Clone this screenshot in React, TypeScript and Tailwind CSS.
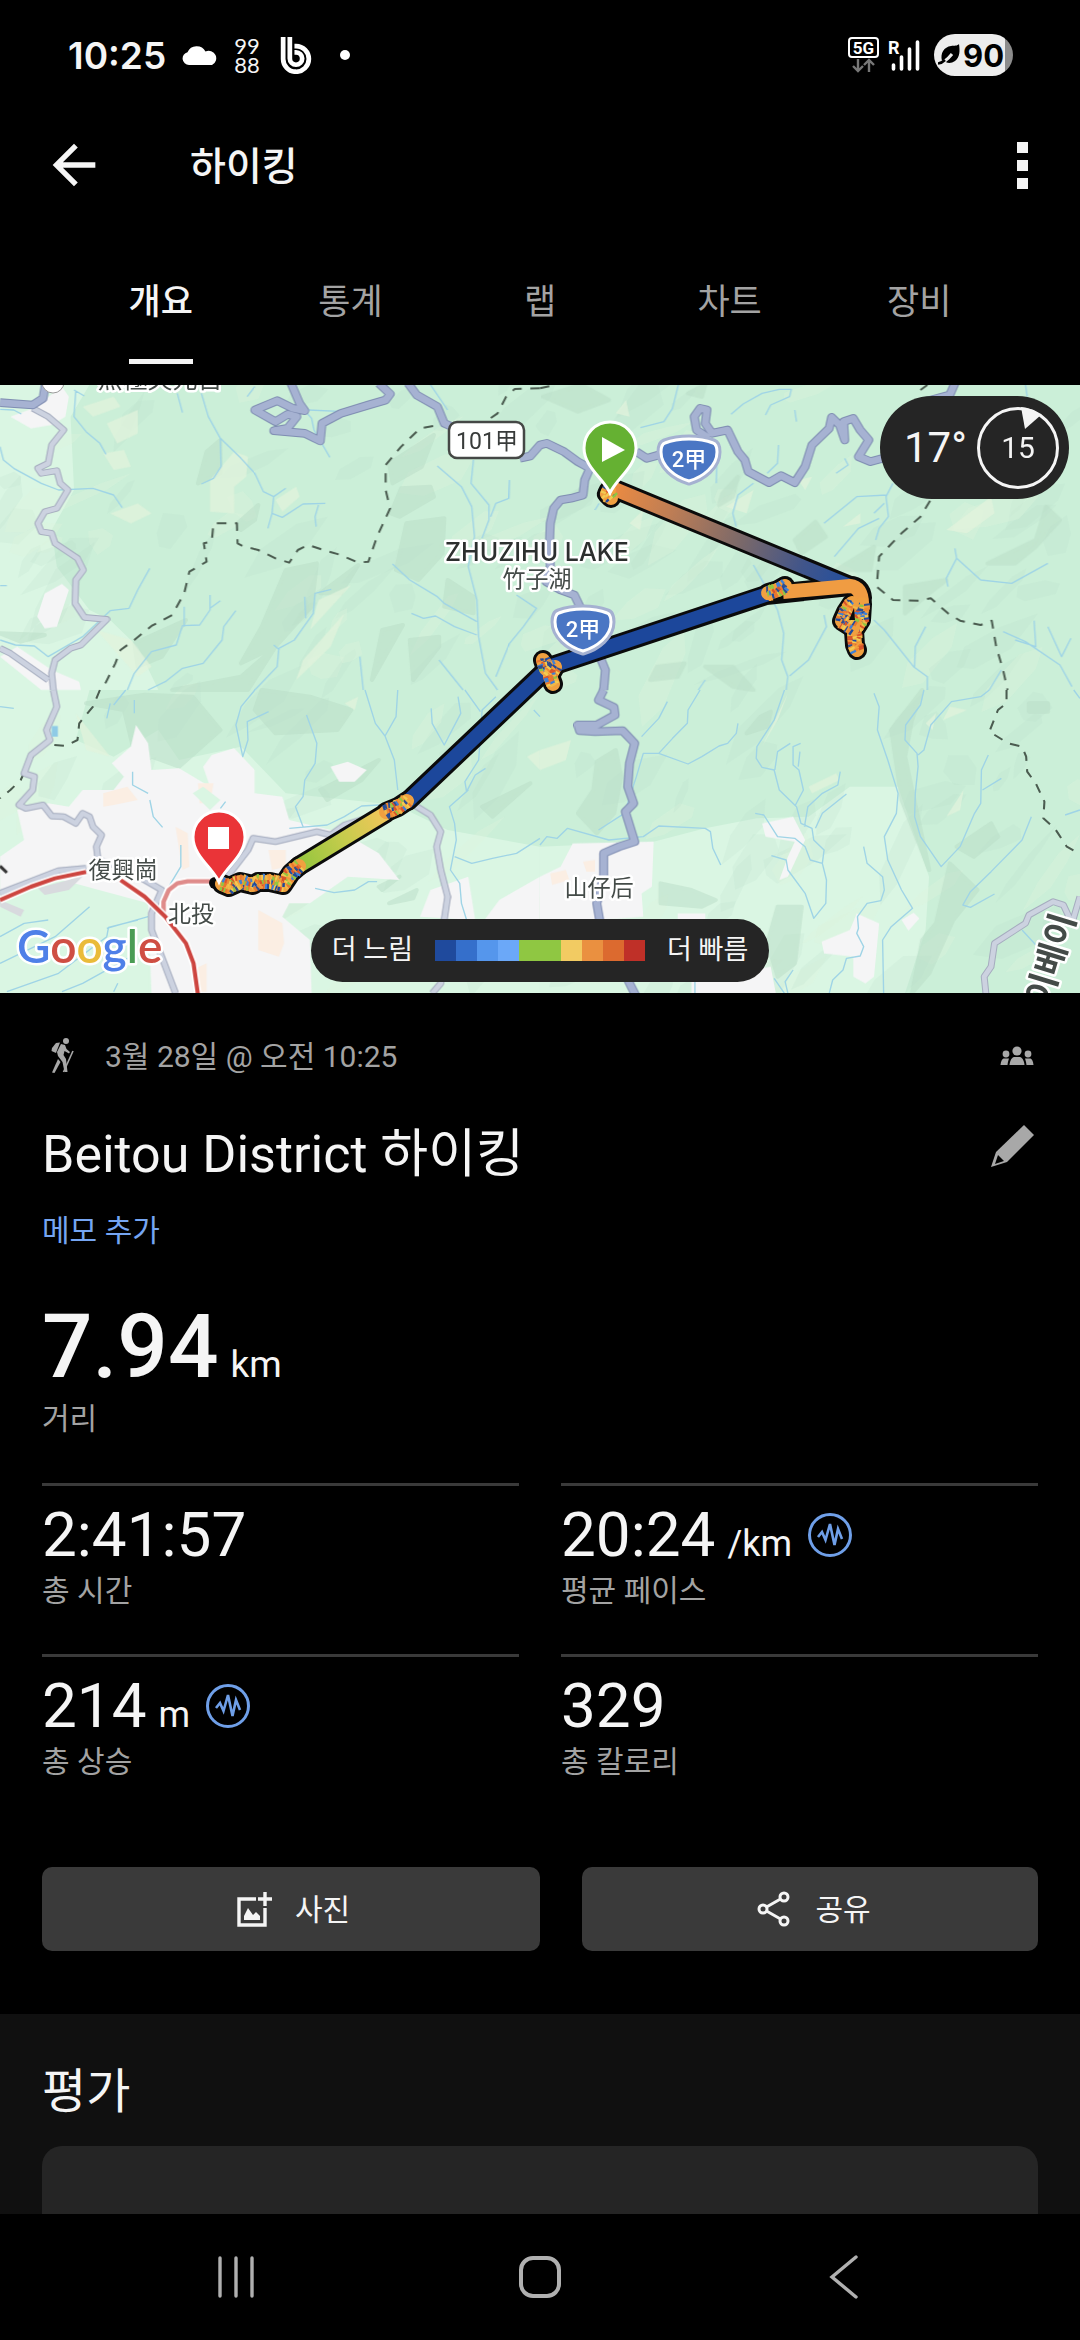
import { ReactNode } from "react";
import { MdArrowBack } from "react-icons/md";

type Point = [number, number];

const TABS = ["개요", "통계", "랩", "차트", "장비"];

const LEGEND_COLORS = [
  "bg-[#1f4a9d]",
  "bg-[#356fcb]",
  "bg-[#5596ec]",
  "bg-[#6ba8f8]",
  "bg-[#8fc742]",
  "bg-[#8fc742]",
  "bg-[#f2cb62]",
  "bg-[#ea9040]",
  "bg-[#dc6a2f]",
  "bg-[#bf3028]",
];

const SPEED_COLORS = [
  "#f2a03d",
  "#1f4a9d",
  "#e9772f",
  "#f2cb52",
  "#8fc742",
  "#ee8a35",
  "#3f7fd6",
  "#f0b848",
  "#d9542b",
  "#f39a3c",
  "#2f4f8f",
];

// Map geometry, drawn on a grid of four tiles of 1568x930 units.
const TILES: Record<string, string> = {
  a: "translate(0 0)",
  b: "translate(1568 0)",
  c: "translate(0 930)",
  d: "translate(1568 930)",
};

const HIGHWAYS = {
  a: "M0 68L95 75L125 55L132 10M845 10L870 70L885 92L850 85L805 62L740 90L800 125L835 103L862 110L835 145L795 152L885 160L930 183L935 130L990 100L1070 75L1120 60L1133 42L1100 10M1185 10L1210 45L1270 80L1290 130L1312 140",
  b: "M-58 235L-28 228L0 195L20 190L70 215L110 245L145 265L130 300L125 345L90 355L60 360L40 385L30 430L28 480L30 560L18 605L60 630L100 645L130 710L150 760L170 820L190 870L185 930M280 215L310 235L345 225L400 200L450 300M490 175L455 150L448 110L465 85L485 90L480 130L500 160L545 150L575 215L595 240L605 275L665 308L700 287L740 308L770 260L790 195L840 145L847 112L870 135L885 180L882 125L910 115L930 150L955 180L925 230L960 245L995 235M1205 10L1190 45L1100 70",
  c: "",
  d: "M185 0L170 30L215 52L218 75L165 105L110 105L115 122L160 125L240 122L275 160L260 220L255 290L272 340L248 365L275 455L230 470L185 490L185 560L165 640L175 700L265 890L285 930",
};

const STREETS = {
  a: "M95 85L140 110L185 150L150 195L140 250L110 265L120 280L165 272L175 310L197 330L165 385L130 395L110 430L120 455L150 460L160 490L225 535L242 570L220 600L218 670L245 712L310 718L235 795L205 805L160 840L150 880L155 930M0 805L30 820L140 900",
  b: "",
  c: "M155 0L165 50L135 120L145 150L90 195L70 250L100 260L95 300L55 345L75 355L125 345L150 378L185 380L220 400L240 370L260 380L270 410L295 435L280 470L285 510L350 530L420 570L470 600L440 670L440 720L510 910M660 560L720 480L735 445L800 455L920 425L960 435L1000 405L1080 380M1195 340L1250 375L1280 425L1268 470L1280 540L1300 620L1290 690L1280 880L1255 910M0 610L170 542L250 535",
  d: "M1295 910L1290 860L1310 830L1320 760L1410 700L1420 675L1490 635L1520 645L1545 700L1568 620",
};

const STREAMS = {
  a: "M215 30L245 48M220 35L215 110L250 155L290 190L308 223M0 200L10 240L40 265L120 310L170 330L270 325L330 345L355 383M0 88L40 90L62 102M0 617L20 617M585 40L605 110L640 175L700 235L740 280L765 335L795 350L830 325M795 350L790 400L820 412L880 372L945 370M925 375L915 410L918 440M790 400L778 445M640 175L642 260L620 295L585 312M515 40L530 98M740 20L718 50M885 92L905 115L912 150L958 232M895 90L1000 95M1250 14L1300 90M1270 258L1340 320L1370 380L1378 470L1360 560L1385 660L1390 770L1410 880L1445 930M1375 240L1368 310L1420 375L1420 420L1400 475M1480 300L1478 355L1440 370L1425 410M1140 552L1190 600L1270 650L1290 670L1385 725M1195 700L1230 715L1265 708L1320 740L1385 765M1500 645L1558 685L1520 740L1480 790L1440 890M1045 830L1055 930M1275 840L1345 930M435 565L400 630L375 685L320 692L240 770L140 830L100 798L45 795L0 780M610 645L610 690L580 735L530 737L512 795L440 815L390 880L370 930M535 680L535 740M640 662L610 685M685 692L650 740L645 780L590 850L530 865L480 905L430 930M962 628L915 640L910 700L855 780L810 805L805 860L740 930M885 650L888 715M795 795L812 810",
  b: "M402 14L385 85L360 125L292 143M555 103L590 72L645 40L695 28L730 28L725 50L670 75L655 105M740 90L745 125M693 195L690 250L660 280M620 310L575 345L560 400L570 440M1008 345L920 350L825 430M1025 310L1005 350L1012 410L985 445L975 480M985 415L925 445L855 530M1000 370L970 400M620 555L650 610L690 690L708 760L702 840L720 890L715 930M825 705L832 740L780 840L725 888M480 900L460 930M970 720L1000 750L1085 860L1125 890L1125 930M1120 740L1090 800L1088 860M1205 505L1210 535L1180 595L1185 620M1210 535L1280 600L1370 610L1475 550M1345 755L1410 785L1510 855L1545 920M1435 722L1440 800L1380 780M1475 740L1515 830L1542 775M1340 870L1305 930M860 280L895 255L885 235M515 220L512 310M1410 14L1415 50M160 390L172 370",
  c: "M320 40L310 85M365 0L330 45M390 30L390 70M740 0L700 50L685 105L705 200L720 150L718 95L780 65M890 75L920 160L915 220L885 270L880 320L858 350L880 410M1060 0L1090 100L1118 138L1150 80L1155 0M1118 138L1145 210L1155 300M1100 345L1050 348L1000 380L950 405L840 415M1330 20L1338 70L1290 165L1255 100L1252 55M1395 65L1350 0M1568 80L1550 60M1410 235L1380 255L1355 305L1350 275L1390 210L1400 60L1440 20M1360 300L1305 350L1320 400L1325 450L1308 540L1335 580L1340 640L1355 690M1568 445L1500 490L1430 505L1370 520L1320 500M385 245L385 285L430 310M435 330L445 380L472 412M525 465L525 530L490 590M915 595L970 608L1030 600L1070 575L1095 575M0 50L40 55M655 335L640 355M0 820L60 790L160 740L260 650M310 740L315 712L400 690M430 680L310 715M310 740L170 850L20 905M380 800L240 880L180 905M0 740L70 700L140 690M330 905L342 880",
  d: "M370 35L345 85L295 140M465 0L430 60L428 100L385 145L345 190L300 190L280 260L245 370L170 420M345 190L430 222L470 200L520 168L545 160L570 130L575 100M710 0L680 90L630 170L628 205L645 232L680 240L695 300L745 350L758 400L790 415L795 450L825 480L820 520L832 570L830 640L795 685L770 610L720 540L715 510L672 497M727 160L690 185L682 240M757 160L735 170L735 225L752 240L765 300L742 345M755 185L750 230M872 245L865 285L820 310L778 350L768 410M890 312L820 370L800 415M625 370L650 375L690 440L740 445L770 470L785 510L820 520M0 465L20 440L50 445L80 415L200 450L300 440L345 408L480 415L495 425L502 475L525 525M970 10L985 50L980 120L1010 210L1040 310L1035 370L1000 440L1010 510L1050 600L1082 655L1020 710L995 750L998 910M1115 0L1105 45L1062 105L1060 150L1095 190L1098 230L1090 310L1088 380L1105 440L1165 530L1220 470L1262 370L1280 340L1282 240L1302 195M1305 0L1280 20L1195 35L1135 105L1115 180L1098 195M1340 265L1285 300M1427 380L1400 450L1310 545L1250 605L1228 645L1250 652L1320 612M940 470L950 520L995 560L1000 600L990 632L950 640L922 680L925 715L920 730L940 770L930 798L890 805L880 840L850 870L840 910M735 840L712 875L720 910M680 865L710 910M450 870L450 910M1550 0L1568 25M1568 360L1525 375M1400 720L1440 765",
};

const BORDERS = {
  a: "M1568 25L1495 27L1470 50L1445 100L1420 118M1258 138L1220 145L1165 200L1120 255L1120 330L1133 385L1095 470L1070 545L1040 548L990 525L940 510L895 495L865 510L840 548L800 535L750 510L705 498L690 490L688 430L620 430L615 485L592 490L600 545L550 575L535 640L500 705L440 738L390 780L350 810L335 850L305 912",
  b: "M0 25L45 15M1105 30L1125 15M1133 362L1105 410L1050 460L985 530L978 620L1025 660L1100 662L1135 655L1185 700L1220 722L1280 735L1312 722L1325 800L1345 870L1358 930",
  c: "M290 0L270 50L230 100L225 150L190 168L130 162L90 205L60 270L30 300L0 325",
  d: "M1355 0L1355 40L1330 60L1305 125L1360 160L1400 170L1412 200L1415 245L1440 280L1465 335L1462 385L1495 415L1530 470L1568 492",
};

const URBAN = {
  a: "M30 110L95 85L180 20L200 50L190 110L150 135L90 145ZM130 640L180 612L200 630L165 740L130 745L108 710ZM0 830L50 800L150 870L230 905L235 930L120 930Z",
  b: "",
  c: "M70 450L50 360L140 340L200 350L240 300L330 300L360 260L325 220L380 170L395 105L430 160L440 240L520 235L610 290L590 230L615 195L680 175L740 240L740 310L820 320L840 390L1000 430L1100 490L1160 570L1010 560L900 640L840 640L820 680L900 750L905 910L440 910L430 640L300 690L240 600L0 660L0 500ZM960 230L1010 215L1065 240L1030 275L985 275ZM1220 680L1250 600L1360 560L1380 690ZM1450 630L1568 560L1568 700L1400 700Z",
  d: "M0 560L60 530L95 460L330 455L325 590L295 610L300 680L180 690L0 690ZM645 400L735 380L770 450L720 560L695 570L720 500L740 455L655 440ZM818 755L900 720L920 670L985 700L970 860L945 880L910 860L910 800L825 790ZM1050 690L1085 668L1102 685L1070 722ZM400 670L480 670L480 690L400 700ZM440 870L670 830L685 910L440 910Z",
};

const LOWLAND = {
  a: "M0 14L260 14L205 110L215 330L150 450L165 560L260 690L320 720L400 800L460 930L0 930Z",
  b: "",
  c: "M0 0L260 0L220 150L330 200L460 120L520 210L700 170L830 310L1150 345L1300 420L1568 470L1568 910L0 910Z",
  d: "M0 470L330 455L480 415L630 385L780 380L900 290L1040 290L1130 560L1120 720L1060 910L0 910Z",
};

const SHADE = {
  a: "M1165 325L1250 320L1260 350L1160 410L1135 400ZM1180 430L1290 415L1285 520L1215 600L1150 570ZM830 570L920 550L905 680L800 800L700 850L760 740ZM600 215L640 180L640 280L575 310ZM1130 250L1260 165L1225 260L1140 310ZM0 760L130 765L60 785ZM390 790L540 720L470 830L400 860ZM930 640L1040 555L990 640ZM690 430L750 375L740 420L700 450ZM1300 600L1375 650L1375 700L1290 680ZM1190 780L1275 770L1275 800L1200 900ZM1080 900L1110 750L1170 735ZM500 930L700 890L800 800L720 930Z",
  b: "M10 50L120 14L200 60L110 95ZM740 480L800 425L830 470L760 520ZM1210 180L1300 210L1290 240L1200 215ZM1470 380L1510 420L1440 500L1380 550L1300 550L1440 480ZM530 340L575 290L560 350L520 375ZM1060 620L1180 600L1130 640L1060 700ZM480 860L560 860L620 930L560 920ZM340 860L420 850L400 890L320 900ZM430 40L480 14L470 50ZM960 570L860 570L970 500Z",
  c: "M400 230L360 60L250 40L420 14L560 20L640 120L520 230L440 200ZM760 0L900 20L1020 60L980 120L800 130L740 60ZM930 300L1100 210L1050 270L950 330ZM1400 350L1540 280L1430 380ZM1100 590L1160 560L1110 600ZM1130 640L1210 600L1200 625Z",
  d: "M165 215L220 180L235 260L215 370L165 430L110 370L155 300ZM1020 120L1110 0L1080 90L1060 200L1130 540L1050 330ZM1110 750L1150 700L1190 520L1270 600L1200 690L1130 850L1080 910ZM1210 470L1310 400L1330 440L1260 500ZM1420 40L1475 40L1475 65L1420 65ZM660 760L690 650L760 650L740 820L690 860ZM350 580L440 600L510 630L470 650L350 640ZM640 80L670 65L660 110L600 130Z",
};

const MEADOW = {
  a: "M610 300L680 215L720 230L715 290L680 320L680 400L610 395ZM310 130L400 90L400 160L340 190ZM800 360L860 320L870 350L820 395ZM300 220L360 210L380 260L330 270ZM320 400L400 370L440 400L380 430ZM240 80L330 50L350 80L270 110ZM925 660L1020 615L900 750ZM880 840L1000 700L960 800L860 900ZM280 750L380 780L440 860L400 890Z",
  b: "M1180 450L1310 350L1320 400L1240 460ZM540 380L620 330L600 400ZM220 100L250 60L260 110ZM880 440L930 400L930 430ZM260 430L300 390L290 450ZM750 300L790 290L770 330Z",
  c: "M220 70L320 200L250 180ZM1530 200L1568 180L1568 240ZM1000 40L1040 20L1030 60Z",
  d: "M0 180L90 150L75 210L0 240ZM645 170L720 10L690 90ZM1190 50L1240 60L1170 90ZM1120 100L1150 70L1140 120ZM780 290L860 250L870 270L790 310ZM1180 380L1230 300L1220 360Z",
};

const PEACH = {
  a: "",
  b: "",
  c: "M300 310L370 290L400 330L330 345L300 350ZM510 410L545 430L550 530L530 540ZM780 480L830 480L830 530L790 540ZM750 660L820 700L825 760L810 800L750 780ZM575 280L620 280L610 340L580 340ZM560 840L600 820L600 905L570 905Z",
  d: "M30 550L75 540L85 570L35 585ZM125 515L160 510L160 545L135 545Z",
};

// Small seeded generator, so the hillshade is the same on every render.
const makeRandom = (seed: number) => {
  let s = seed;
  return () => {
    s = (s * 16807) % 2147483647;
    return s / 2147483647;
  };
};

const hillshade = (() => {
  const rand = makeRandom(4711);
  return Array.from({ length: 230 }, (_, i) => {
    const cx = rand() * 3136;
    const cy = rand() * 1840;
    const len = 40 + rand() * 120;
    const wid = 14 + rand() * 40;
    const tilt = -0.3 - rand() * 0.9;
    const pts = Array.from({ length: 6 }, (_, k) => {
      const a = (k / 6) * Math.PI * 2;
      const x = Math.cos(a) * len * (0.6 + rand() * 0.6);
      const y = Math.sin(a) * wid * (0.6 + rand() * 0.6);
      return [
        Math.round(cx + x * Math.cos(tilt) - y * Math.sin(tilt)),
        Math.round(cy + x * Math.sin(tilt) + y * Math.cos(tilt)),
      ].join(",");
    });
    return { points: pts.join(" "), light: i % 3 === 0 };
  });
})();

const Layer = ({
  paths,
  ...rest
}: {
  paths: Record<string, string>;
  fill?: string;
  stroke?: string;
  strokeWidth?: number;
  strokeDasharray?: string;
  opacity?: number;
}) => (
  <g fill="none" strokeLinejoin="round" {...rest}>
    {Object.entries(paths).map(([tile, d]) =>
      d ? <path key={tile} d={d} transform={TILES[tile]} /> : null,
    )}
  </g>
);

const toPoints = (points: Point[]) => points.map((p) => p.join(",")).join(" ");

// Part of the track where the pace changes at nearly every sample.
const MixedTrack = ({ points, seed }: { points: Point[]; seed: number }) => {
  const rand = makeRandom(seed * 7919);
  const marks: ReactNode[] = [];
  points.slice(1).forEach(([x2, y2], i) => {
    const [x1, y1] = points[i];
    const len = Math.hypot(x2 - x1, y2 - y1);
    const steps = Math.max(1, Math.round(len / 2));
    const nx = -(y2 - y1) / len;
    const ny = (x2 - x1) / len;
    for (let s = 0; s <= steps; s++) {
      const x = x1 + ((x2 - x1) * s) / steps;
      const y = y1 + ((y2 - y1) * s) / steps;
      [-7, -2, 2].forEach((a, k) => {
        const b = a + 5;
        const skew = (rand() - 0.5) * 3;
        marks.push(
          <line
            key={`${i}-${s}-${k}`}
            x1={x + nx * a + skew}
            y1={y + ny * a}
            x2={x + nx * b}
            y2={y + ny * b + skew}
            stroke={SPEED_COLORS[Math.floor(rand() * SPEED_COLORS.length)]}
            strokeWidth={2.4}
          />,
        );
      });
    }
  });
  return (
    <g>
      <polyline
        points={toPoints(points)}
        fill="none"
        stroke="#f0a040"
        strokeWidth={14}
        strokeLinejoin="round"
        strokeLinecap="round"
      />
      {marks}
    </g>
  );
};

const MIXED: Point[][] = [
  [
    [609, 490],
    [607, 494],
    [611, 498],
  ],
  [
    [768, 593],
    [778, 590],
    [785, 586],
  ],
  [
    [862, 604],
    [861, 620],
    [854, 631],
    [855, 645],
    [857, 650],
  ],
  [
    [852, 603],
    [846, 612],
    [842, 621],
    [853, 628],
  ],
  [
    [543, 660],
    [546, 669],
    [555, 667],
    [550, 676],
    [553, 684],
  ],
  [
    [407, 801],
    [398, 807],
    [386, 812],
  ],
  [
    [299, 866],
    [291, 873],
    [283, 885],
    [270, 882],
    [258, 882],
    [253, 885],
    [240, 882],
    [229, 887],
    [222, 884],
  ],
];

const RoadShield = ({ x, y }: { x: number; y: number }) => (
  <g transform={`translate(${x} ${y})`}>
    <path
      d="M0-22C10-22 19-20 25-18C28-17 29-14 29-8C29 6 15 18 0 22C-15 18-29 6-29-8C-29-14-28-17-25-18C-19-20-10-22 0-22Z"
      fill="#4a76c4"
      stroke="#a5b1d1"
      strokeWidth="7"
    />
    <path
      d="M0-21C10-21 19-19 24-17C27-16 28-13 28-8C28 6 14 17 0 21C-14 17-28 6-28-8C-28-13-27-16-24-17C-19-19-10-21 0-21Z"
      fill="#4a76c4"
      stroke="#fff"
      strokeWidth="3"
    />
    <text
      y="7"
      textAnchor="middle"
      className="fill-white text-[22px] font-medium"
    >
      2甲
    </text>
  </g>
);

const MapPin = ({
  x,
  y,
  color,
  children,
}: {
  x: number;
  y: number;
  color: string;
  children: ReactNode;
}) => (
  <g transform={`translate(${x} ${y})`}>
    <path
      d="M0 44C-6 30-26 18-26-1A26 26 0 1 1 26-1C26 18 6 30 0 44Z"
      fill={color}
      stroke="#fff"
      strokeWidth="3"
    />
    {children}
  </g>
);

const RouteMap = () => (
  <svg
    viewBox="0 385 1080 608"
    className="block w-full"
    role="img"
    aria-label="하이킹 경로 지도"
  >
    <defs>
      <linearGradient
        id="descent"
        gradientUnits="userSpaceOnUse"
        x1="612"
        y1="488"
        x2="850"
        y2="585"
      >
        <stop offset="0" stopColor="#ec8b41" />
        <stop offset="0.25" stopColor="#bd7d55" />
        <stop offset="0.55" stopColor="#79686a" />
        <stop offset="0.8" stopColor="#41558a" />
        <stop offset="1" stopColor="#224f9f" />
      </linearGradient>
      <linearGradient
        id="climb"
        gradientUnits="userSpaceOnUse"
        x1="303"
        y1="864"
        x2="384"
        y2="815"
      >
        <stop offset="0" stopColor="#97c63f" />
        <stop offset="0.5" stopColor="#c5cc4c" />
        <stop offset="1" stopColor="#f0c65a" />
      </linearGradient>
    </defs>

    <rect y="385" width="1080" height="608" fill="#cbefd8" />
    <g transform="translate(0 380) scale(0.34435 0.33333)">
      <Layer paths={LOWLAND} fill="#daf6e3" />
      {hillshade.map(({ points, light }) => (
        <polygon
          key={points}
          points={points}
          fill={light ? "#def3dc" : "#b6dcc4"}
          opacity={light ? 0.35 : 0.16}
        />
      ))}
      <Layer
        paths={SHADE}
        fill="#b9dcc6"
        stroke="#b9dcc6"
        strokeWidth={12}
        opacity={0.5}
      />
      <Layer paths={MEADOW} fill="#e2f3dc" opacity={0.75} />
      <Layer paths={URBAN} fill="#f5f5f6" />
      <Layer paths={PEACH} fill="#fbeee3" />
      <path
        d="M0 1530L180 1500L430 1570L430 1840L0 1840ZM560 1240L590 1220L640 1260L610 1290Z"
        fill="#daf6e3"
      />
      <path
        d="M110 1525L200 1500L250 1480L200 1530L130 1545ZM0 1560L70 1590L60 1610L0 1580Z"
        fill="#d8dade"
      />
      <Layer paths={STREAMS} stroke="#9fd4e6" strokeWidth={4} />
      <Layer
        paths={BORDERS}
        stroke="#4b5c50"
        strokeWidth={6}
        strokeDasharray="28 25"
      />
      <Layer paths={STREETS} stroke="#a6adbf" strokeWidth={20} />
      <Layer paths={STREETS} stroke="#ccd2e0" strokeWidth={14} />
      <Layer paths={HIGHWAYS} stroke="#7f8db2" strokeWidth={26} />
      <Layer paths={HIGHWAYS} stroke="#a6b2d2" strokeWidth={20} />
      <g transform={TILES.c} fill="none" strokeLinejoin="round">
        <path
          d="M475 675L475 635L490 600L515 580L545 574L630 574"
          stroke="#fff"
          strokeWidth="24"
        />
        <path
          d="M475 675L475 635L490 600L515 580L545 574L630 574"
          stroke="#df8b8a"
          strokeWidth="13"
        />
        <path
          d="M0 630L90 590L160 565L250 546M350 570L420 620L480 680L540 760L562 820L575 915"
          stroke="#fff"
          strokeWidth="22"
        />
        <path
          d="M0 630L90 590L160 565L250 546M350 570L420 620L480 680L540 760L562 820L575 915"
          stroke="#cd4540"
          strokeWidth="12"
        />
        <path d="M0 528L20 548" stroke="#333" strokeWidth="9" />
        <path d="M150 108h18v32h-18z" fill="#8fcbe6" />
      </g>
    </g>

    <circle cx="53" cy="382" r="11" fill="#fff" stroke="#999" />

    <g
      className="fill-[#444b48] text-[23px]"
      stroke="#fff"
      strokeWidth="5"
      strokeLinejoin="round"
      paintOrder="stroke"
      textAnchor="middle"
    >
      <text x="160" y="388" className="text-[25px]">
        無極天元宮
      </text>
      <text
        x="537"
        y="561"
        className="fill-[#2c2f2e] font-['Inter'] text-[25px] font-medium"
      >
        ZHUZIHU LAKE
      </text>
      <text x="537" y="587">
        竹子湖
      </text>
      <text x="599" y="896">
        山仔后
      </text>
      <text x="123" y="878">
        復興崗
      </text>
      <text x="191" y="922">
        北投
      </text>
      <text
        transform="translate(1076 918) rotate(-73)"
        textAnchor="end"
        className="text-[34px] font-bold"
      >
        타이베이
      </text>
    </g>

    <rect
      x="449"
      y="422"
      width="75"
      height="36"
      rx="8"
      fill="#fff"
      stroke="#454846"
      strokeWidth="2.5"
    />
    <text
      x="487"
      y="449"
      textAnchor="middle"
      className="fill-[#383b3a] text-[23px]"
    >
      101甲
    </text>

    <g
      fill="none"
      stroke="#0b0b0b"
      strokeWidth="20"
      strokeLinejoin="round"
      strokeLinecap="round"
    >
      <path d="M612 488L850 586" />
      <path d="M549 667L766 595L850 586Q861 586 862 598" />
      <path d="M545 671L408 801M386 813L299 866" />
      {MIXED.map((points) => (
        <polyline key={points[0].join()} points={toPoints(points)} />
      ))}
    </g>
    <circle cx="215" cy="883" r="6" fill="#0b0b0b" />
    <g fill="none" strokeWidth="14" strokeLinejoin="round">
      <path d="M612 488L852 587" stroke="url(#descent)" />
      <path d="M552 666L768 594M545 671L406 803" stroke="#1c479b" />
      <path d="M783 592L850 586Q862 587 862 604" stroke="#f09c42" />
      <path d="M386 813L299 866" stroke="url(#climb)" />
    </g>
    {MIXED.map((points, i) => (
      <MixedTrack key={i} points={points} seed={97 + i * 31} />
    ))}
    <path d="M854 608l-5 12h6z" fill="#0b0b0b" />

    <RoadShield x={689} y={460} />
    <RoadShield x={583} y={630} />

    <MapPin x={610} y={449} color="#65b132">
      <path d="M-8-12L15 1L-8 13Z" fill="#fff" />
    </MapPin>
    <MapPin x={219} y={838} color="#ea3438">
      <path d="M-11-11H10V11H-11Z" fill="#fff" />
    </MapPin>

    <text
      x="17"
      y="963"
      className="font-['Lato'] text-[46px] font-semibold"
      stroke="#fff"
      strokeWidth="5"
      strokeLinejoin="round"
      paintOrder="stroke"
    >
      <tspan fill="#4f80e8">G</tspan>
      <tspan fill="#cf4e43">o</tspan>
      <tspan fill="#eabb3a">o</tspan>
      <tspan fill="#4f80e8">g</tspan>
      <tspan fill="#4a9c54">l</tspan>
      <tspan fill="#cf4e43">e</tspan>
    </text>
  </svg>
);

const StatusBar = () => (
  <div className="flex h-[110px] items-center justify-between pr-[67px] pl-[68px]">
    <div className="flex items-center">
      <span className="mr-4 font-['Inter'] text-[37px] leading-none font-semibold">
        10:25
      </span>
      <svg width="36" height="20" viewBox="0 0 36 20" className="mr-4">
        <path
          d="M7 20A6.500 6.500 0 0 1 5.500 7.200A10 10 0 0 1 23.500 6.500A7 7 0 0 1 30 20Z"
          fill="#fff"
        />
      </svg>
      <span className="mr-5 flex flex-col font-['Lato'] text-[22px] leading-[19px]">
        <span>99</span>
        <span>88</span>
      </span>
      <svg width="32" height="37" viewBox="0 0 30 36" className="mr-7">
        <g fill="none" stroke="#fff" strokeWidth="4.600">
          <path d="M2.500 0V21A12.500 12.500 0 1 0 15 8.800H13.500" />
          <path d="M9 0V21A6 6 0 1 0 15 15H13.500" />
        </g>
      </svg>
      <span className="size-[10px] rounded-full bg-white" />
    </div>
    <div className="flex items-center">
      <svg width="32" height="38" viewBox="0 0 32 38" className="mr-2">
        <rect
          x="1"
          y="2"
          width="29"
          height="19"
          rx="3"
          fill="none"
          stroke="#fff"
          strokeWidth="2"
        />
        <text
          x="15.500"
          y="17.500"
          textAnchor="middle"
          className="fill-white text-[17px] font-bold"
        >
          5G
        </text>
        <path
          d="M10 23V35M5 30L10 35L15 30M21 36V24M16 29L21 24L26 29"
          fill="none"
          stroke="#777"
          strokeWidth="2.400"
        />
      </svg>
      <svg width="32" height="34" viewBox="0 0 32 34" className="mr-[14px]">
        <text x="0" y="16" className="fill-white text-[18px] font-bold">
          R
        </text>
        <path
          d="M5.500 27V31M13.500 19V31M21.500 11V31M29.500 4V31"
          stroke="#fff"
          strokeWidth="3.600"
          strokeLinecap="round"
        />
      </svg>
      <div className="flex h-[42px] w-[79px] items-center gap-[2px] overflow-hidden rounded-full bg-linear-to-r from-[#ededed] from-90% to-[#8c8c8c] to-90% pl-1">
        <svg width="23" height="22" viewBox="0 0 23 22">
          <path
            d="M4 17C2 9 6 3 13 2C17 1.500 19 2 21 0C22 7 22 13 17 17C13 20 8 19 6 17Z"
            fill="#000"
          />
          <path
            d="M0 20C6 19 10 15 14 10"
            fill="none"
            stroke="#ededed"
            strokeWidth="3"
          />
          <path
            d="M0 19.500C3 19 5 18 7 16"
            fill="none"
            stroke="#000"
            strokeWidth="2.500"
          />
        </svg>
        <span className="font-['Inter'] text-[31px] leading-none font-bold text-black">
          90
        </span>
      </div>
    </div>
  </div>
);

const WaveIcon = () => (
  <svg width="44" height="44" viewBox="0 0 44 44" fill="none" stroke="#6f9fe8">
    <circle cx="22" cy="22" r="20.500" strokeWidth="3" />
    <path
      d="M10 24L14 19L17.500 27L22 11L26.500 32L30 16L34 26"
      strokeWidth="2.600"
    />
  </svg>
);

const Stat = ({
  value,
  unit,
  label,
  estimated,
}: {
  value: string;
  unit?: string;
  label: string;
  estimated?: boolean;
}) => (
  <div className="h-[171px] border-t-[3px] border-[#3a3a3a] pt-3">
    <div className="flex items-center gap-4">
      <p className="text-[62px] leading-[74px]">
        {value}
        {unit && <span className="ml-3 text-[36px] leading-none">{unit}</span>}
      </p>
      {estimated && <WaveIcon />}
    </div>
    <p className="text-[30px] leading-[38px] text-[#a3a3a3]">{label}</p>
  </div>
);

export default function App() {
  return (
    <div className="flex min-h-screen flex-col bg-black font-['Roboto','Noto_Sans_CJK_KR',sans-serif] text-[#f5f5f5]">
      <StatusBar />

      <header className="flex h-[110px] items-center pr-[52px] pl-[42px]">
        <button type="button" aria-label="뒤로">
          <MdArrowBack size={64} />
        </button>
        <h1 className="ml-[84px] flex-1 pt-1 text-[39px] font-medium">
          하이킹
        </h1>
        <button
          type="button"
          aria-label="메뉴"
          className="flex flex-col gap-[7px]"
        >
          <span className="size-[11px] bg-[#f5f5f5]" />
          <span className="size-[11px] bg-[#f5f5f5]" />
          <span className="size-[11px] bg-[#f5f5f5]" />
        </button>
      </header>

      <nav className="grid h-[165px] grid-cols-5 px-[66px]">
        {TABS.map((tab, i) => (
          <button
            key={tab}
            type="button"
            className={
              i === 0
                ? "mb-[21px] justify-self-center border-b-[5px] border-[#f5f5f5] pt-7 text-[35px] font-medium"
                : "mb-[21px] justify-self-center border-b-[5px] border-transparent pt-7 text-[35px] text-[#a3a3a3]"
            }
          >
            {tab}
          </button>
        ))}
      </nav>

      <section className="relative">
        <RouteMap />
        <div className="absolute top-[11px] right-[11px] flex h-[103px] w-[189px] items-center justify-between rounded-full bg-[#252525] pr-[10px] pl-6">
          <span className="text-[42px]">17°</span>
          <div className="relative flex size-[82px] items-center justify-center rounded-full border-[3px] border-[#f5f5f5] text-[30px]">
            15
            <svg
              width="22"
              height="24"
              viewBox="0 0 22 24"
              className="absolute -top-1 left-[40px]"
            >
              <path d="M1 1Q12 2 21 9L5 23Z" fill="#f5f5f5" />
            </svg>
          </div>
        </div>
        <div className="absolute inset-x-0 bottom-[11px] flex justify-center">
          <div className="flex h-[63px] items-center gap-[22px] rounded-full bg-[#252525] px-[21px] text-[27px]">
            <span>더 느림</span>
            <div className="flex">
              {LEGEND_COLORS.map((color, i) => (
                <span key={i} className={`size-[21px] ${color}`} />
              ))}
            </div>
            <span>더 빠름</span>
          </div>
        </div>
      </section>

      <main className="px-[42px] pt-9">
        <div className="flex h-[54px] items-center text-[#a3a3a3]">
          <svg
            width="24"
            height="36"
            viewBox="0 0 24 36"
            className="ml-[9px]"
            fill="#a8a8a8"
          >
            <circle cx="15" cy="3" r="3" />
            <path d="M5 5L9 4.500L5 15L0.500 13L1 10Z" />
            <path d="M10 6L14 7L15.500 11L19 14L18 15.500L13.500 13L12.500 17L15 21L16.500 34H13.500L11.500 24L7 18L6 14Z" />
            <path d="M7 21L9.500 24L3.500 35L1 34.500Z" />
            <path
              d="M22 13L12.500 34"
              stroke="#a8a8a8"
              strokeWidth="1.600"
              fill="none"
            />
          </svg>
          <p className="ml-[30px] flex-1 text-[30px]">3월 28일 @ 오전 10:25</p>
          <svg
            width="34"
            height="20"
            viewBox="0 0 34 20"
            className="mr-1"
            fill="#a8a8a8"
          >
            <circle cx="17" cy="5" r="4.600" />
            <circle cx="6" cy="8" r="3.400" />
            <circle cx="28" cy="8" r="3.400" />
            <path d="M9.500 19C10 14 12 11.500 14 11H20C22 11.500 24 14 24.500 19Z" />
            <path d="M0.500 19C1 15 2 13 3.500 12.500H9C8.500 14 7.800 16 7.500 19Z" />
            <path d="M33.500 19C33 15 32 13 30.500 12.500H25C25.500 14 26.200 16 26.500 19Z" />
          </svg>
        </div>

        <div className="mt-9 flex items-center justify-between">
          <h2 className="text-[52px] leading-[72px]">
            Beitou District 하이킹
          </h2>
          <button type="button" aria-label="편집" className="mr-[2px] mb-4">
            <svg width="46" height="46" viewBox="0 0 46 46">
              <path d="M34 1L44 11L17 38L1 43L6 28Z" fill="#a8a8a8" />
              <path d="M8 31L14 37L5 40Z" fill="#000" />
            </svg>
          </button>
        </div>

        <a
          href="#memo"
          className="mt-5 block text-[30px] leading-[40px] text-[#75a5f2]"
        >
          메모 추가
        </a>

        <p className="mt-11 text-[89px] leading-[104px] font-medium">
          7.94
          <span className="ml-3 text-[37px] leading-none font-normal">km</span>
        </p>
        <p className="text-[30px] leading-[40px] text-[#a3a3a3]">거리</p>

        <div className="mt-11 grid grid-cols-2 gap-x-[42px]">
          <Stat value="2:41:57" label="총 시간" />
          <Stat value="20:24" unit="/km" label="평균 페이스" estimated />
          <Stat value="214" unit="m" label="총 상승" estimated />
          <Stat value="329" label="총 칼로리" />
        </div>

        <div className="mt-[42px] flex gap-[42px] text-[30px]">
          <button
            type="button"
            className="flex h-[84px] flex-[83] items-center justify-center gap-[22px] rounded-[10px] bg-[#3a3a3a]"
          >
            <svg
              width="37"
              height="37"
              viewBox="0 0 37 37"
              fill="none"
              className="ml-1"
            >
              <path
                d="M20 8H3V34H29V17"
                stroke="#f5f5f5"
                strokeWidth="3.400"
              />
              <path
                d="M29 1V15M22 8H36"
                stroke="#f5f5f5"
                strokeWidth="3.400"
              />
              <path d="M8 29V25L12 17L17 24L20 21L24 25V29Z" fill="#f5f5f5" />
            </svg>
            사진
          </button>
          <button
            type="button"
            className="flex h-[84px] flex-[76] items-center justify-center gap-6 rounded-[10px] bg-[#3a3a3a]"
          >
            <svg
              width="34"
              height="36"
              viewBox="0 0 34 36"
              fill="none"
              stroke="#f5f5f5"
              strokeWidth="3"
              className="ml-2"
            >
              <circle cx="27" cy="6" r="4" />
              <circle cx="6" cy="18" r="4" />
              <circle cx="27" cy="30" r="4" />
              <path d="M9.500 16L23.500 8M9.500 20L23.500 28" />
            </svg>
            공유
          </button>
        </div>
      </main>

      <section className="mt-[63px] flex flex-1 flex-col bg-[#101010] px-[42px] pt-[42px]">
        <h2 className="text-[48px] leading-[72px]">평가</h2>
        <div className="mt-[18px] flex-1 rounded-t-[20px] bg-[#252525]" />
      </section>

      <footer className="grid h-[126px] grid-cols-[236px_1fr_236px] items-center bg-black px-[118px] text-[#b0b0b0]">
        <button
          type="button"
          aria-label="최근 앱"
          className="justify-self-center"
        >
          <svg
            width="40"
            height="42"
            viewBox="0 0 40 42"
            stroke="currentColor"
            strokeWidth="3.400"
            strokeLinecap="round"
          >
            <path d="M4 2V40M20 2V40M36 2V40" />
          </svg>
        </button>
        <button
          type="button"
          aria-label="홈"
          className="size-[42px] justify-self-center rounded-[14px] border-[4px] border-[#b0b0b0]"
        />
        <button
          type="button"
          aria-label="뒤로 가기"
          className="justify-self-center"
        >
          <svg
            width="30"
            height="44"
            viewBox="0 0 30 44"
            fill="none"
            stroke="currentColor"
            strokeWidth="3.400"
            strokeLinecap="round"
          >
            <path d="M27 2L3 22L27 42" />
          </svg>
        </button>
      </footer>
    </div>
  );
}
